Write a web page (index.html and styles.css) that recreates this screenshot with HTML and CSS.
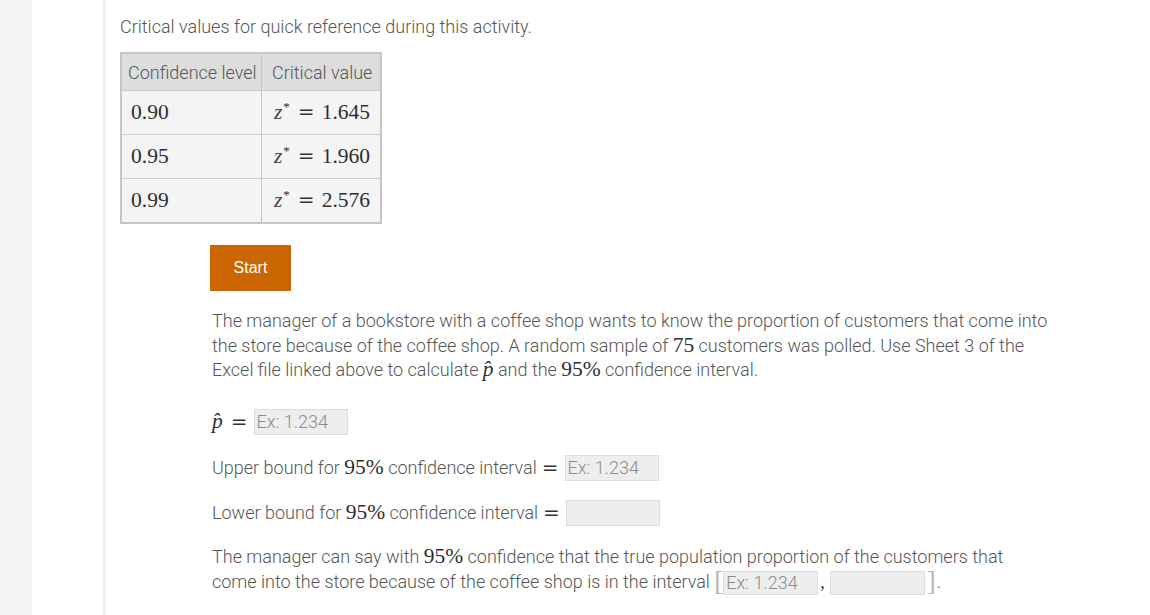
FILE: index.html
```html
<!DOCTYPE html>
<html>
<head>
<meta charset="utf-8">
<link rel="stylesheet" href="styles.css">
</head>
<body>
<div class="page">
  <div class="rail"></div>
  <div class="gutter"></div>
  <main class="content">
    <p class="caption">Critical values for quick reference during this activity.</p>
    <table class="crit">
      <thead>
        <tr><th class="c1">Confidence level</th><th class="c2">Critical value</th></tr>
      </thead>
      <tbody>
        <tr><td class="c1"><span class="m">0.90</span></td><td class="c2"><span class="m"><i>z</i><sup>*</sup><span class="eq">=</span>1.645</span></td></tr>
        <tr><td class="c1"><span class="m">0.95</span></td><td class="c2"><span class="m"><i>z</i><sup>*</sup><span class="eq">=</span>1.960</span></td></tr>
        <tr><td class="c1"><span class="m">0.99</span></td><td class="c2"><span class="m"><i>z</i><sup>*</sup><span class="eq">=</span>2.576</span></td></tr>
      </tbody>
    </table>
    <div class="start-wrap"><button class="start">Start</button></div>
    <section class="question">
      <p class="stem">The manager of a bookstore with a coffee shop wants to know the proportion of customers that come into the store because of the coffee shop. A random sample of <span class="m">75</span> customers was polled. Use Sheet 3 of the Excel file linked above to calculate <span class="m"><i>p̂</i></span> and the <span class="m">95%</span> confidence interval.</p>
      <div class="row r1"><span class="m"><i>p̂</i></span><span class="eq">=</span><input class="ans" placeholder="Ex: 1.234"></div>
      <div class="row"><span>Upper bound for <span class="m">95%</span> confidence interval</span><span class="eq">=</span><input class="ans" placeholder="Ex: 1.234"></div>
      <div class="row r3"><span>Lower bound for <span class="m">95%</span> confidence interval</span><span class="eq">=</span><input class="ans"></div>
      <p class="final">The manager can say with <span class="m">95%</span> confidence that the true population proportion of the customers that come into the store because of the coffee shop is in the interval <span class="br">[</span><input class="ans small" placeholder="Ex: 1.234"><span class="comma">,</span><input class="ans small"><span class="br br-r">]</span>.</p>
    </section>
  </main>
</div>
</body>
</html>
```

FILE: styles.css
```css
html, body {
  margin: 0;
  padding: 0;
  background: #ffffff;
}
body {
  font-family: Roboto, "Liberation Sans", sans-serif;
  font-weight: 300;
  font-size: 18px;
  color: #555555;
  overflow: hidden;
}
.page {
  display: flex;
  min-height: 615px;
}
.rail {
  width: 32px;
  flex: none;
  background: #f3f3f3;
}
.gutter {
  width: 71px;
  flex: none;
  background: #ffffff;
  border-right: 3px solid #efefef;
}
.content {
  flex: 1;
  padding-left: 14px;
}
.caption {
  margin: 15px 0 0 0;
  line-height: 24px;
}
.m {
  font-family: "Liberation Serif", "DejaVu Serif", serif;
  font-weight: 400;
  font-size: 21.5px;
  line-height: 1;
  color: #2e2e2e;
}
.m i {
  font-style: italic;
}
.crit {
  margin-top: 13px;
  border-collapse: separate;
  border-spacing: 0;
  border: 2px solid #c6c6c6;
  table-layout: fixed;
  width: 262px;
}
.crit th, .crit td {
  box-sizing: border-box;
  white-space: nowrap;
}
.crit th {
  background: #dddddd;
  font-weight: 300;
  text-align: left;
  height: 36px;
  padding: 0 0 0 6px;
  color: #555;
}
.crit .c1 {
  width: 140px;
  border-right: 1px solid #c6c6c6;
}
.crit th.c2 {
  padding-left: 10px;
}
.crit td {
  background: #f4f4f4;
  height: 44px;
  border-top: 1px solid #cccccc;
  padding: 0 0 0 9px;
}
.crit td.c2 {
  padding: 0 10px 0 0;
  text-align: right;
}
.crit sup {
  font-size: 13px;
  vertical-align: 8px;
  line-height: 0;
  margin-left: 1px;
}
.crit i { color: #444; }
.eq {
  font-family: "DejaVu Serif", serif;
  font-weight: 400;
  font-size: 20px;
  line-height: 1;
  padding: 0 7px 0 8px;
  color: #333;
}
.start-wrap {
  margin: 21px 0 0 90px;
}
.start {
  display: block;
  width: 81px;
  height: 46px;
  border: none;
  background: #cc6600;
  color: #ffffff;
  font-family: "Liberation Sans", Arial, sans-serif;
  font-size: 16px;
  padding: 0;
}
.question {
  margin-left: 92px;
  width: 838px;
}
.stem {
  margin: 18px 0 0 0;
  line-height: 24.5px;
}
.row {
  display: flex;
  align-items: center;
  height: 26px;
  margin-top: 20px;
}
.row .eq {
  padding: 0 6px 0 5px;
}
.row.r1 { margin-top: 26px; }
.row.r3 { margin-top: 19px; }
.row.r1 .eq { padding: 0 6px 0 8px; }
.ans {
  box-sizing: border-box;
  width: 94px;
  height: 26px;
  background: #eeeeee;
  border: 1px solid #dcdcdc;
  font-family: Roboto, "Liberation Sans", sans-serif;
  font-weight: 300;
  font-size: 18px;
  color: #888;
  padding: 0 2px;
  margin: 0;
  vertical-align: middle;
}
.ans::placeholder { color: #8c8c8c; }
.final {
  margin: 18px 0 0 0;
  line-height: 25px;
}
.final .ans {
  height: 24px;
  width: 95px;
}
.br {
  font-family: "Liberation Serif", serif;
  font-size: 27px;
  line-height: 0;
  color: #b5b5b5;
  vertical-align: -2px;
  padding: 0;
}
.br-r {
  padding: 0 1px 0 2px;
}
.comma {
  font-family: "Liberation Serif", serif;
  font-weight: 400;
  color: #333;
  padding: 0 5px 0 2px;
}
```
